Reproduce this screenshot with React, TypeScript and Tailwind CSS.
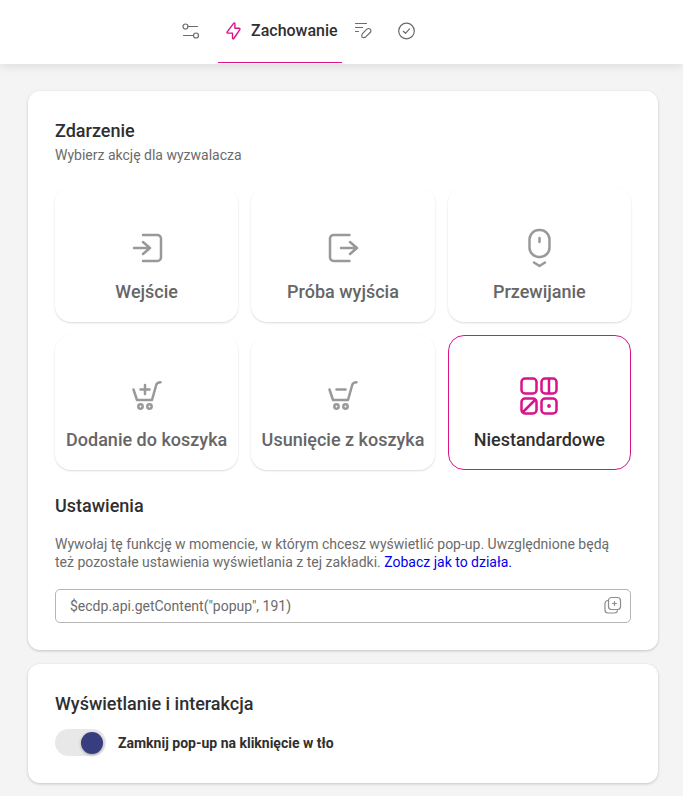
import { useState, type ReactNode } from "react";

const heading = "text-lg leading-6 font-medium text-[#2f2f2f]";

const EnterIcon = () => (
  <svg width="40" height="40" viewBox="0 0 40 40" fill="none" stroke="currentColor" strokeWidth="2.5" strokeLinecap="round" strokeLinejoin="round">
    <path d="M16 7h14.500a3.500 3.500 0 0 1 3.500 3.500v19a3.500 3.500 0 0 1-3.500 3.500H16M7 20h16M16 14l7 6-7 6" />
  </svg>
);

const LeaveIcon = () => (
  <svg width="40" height="40" viewBox="0 0 40 40" fill="none" stroke="currentColor" strokeWidth="2.5" strokeLinecap="round" strokeLinejoin="round">
    <path d="M26.500 7H10.500a3.500 3.500 0 0 0-3.500 3.500v19a3.500 3.500 0 0 0 3.500 3.500h16M18 20h16M27 14l7 6-7 6" />
  </svg>
);

const ScrollIcon = () => (
  <svg width="40" height="40" viewBox="0 0 40 40" fill="none" stroke="currentColor" strokeWidth="2.5" strokeLinecap="round" strokeLinejoin="round">
    <rect x="10.500" y="2" width="20" height="27" rx="9.500" />
    <path d="M20.500 10v4M15 34.500l5.500 3.500 5.500-3.500" />
  </svg>
);

const CartIcon = ({ plus }: { plus?: boolean }) => (
  <svg width="40" height="40" viewBox="0 0 40 40" fill="none" stroke="currentColor" strokeWidth="2.5" strokeLinecap="round" strokeLinejoin="round">
    <path d="M6.500 13.500l3.500 10.500h15l4.200-15q.8-2.700 4.300-2.700" />
    <path d="M13.500 13.500h9" />
    {plus && <path d="M18 9v9" />}
    <circle cx="13.500" cy="30.500" r="2.200" />
    <circle cx="22.500" cy="30.500" r="2.200" />
  </svg>
);

const CustomIcon = () => (
  <svg width="40" height="40" viewBox="0 0 40 40" fill="none" stroke="currentColor" strokeWidth="2.5" strokeLinecap="round">
    <rect x="2.500" y="2.500" width="15" height="15" rx="3.500" />
    <rect x="22.500" y="2.500" width="15" height="15" rx="3.500" />
    <rect x="2.500" y="22.500" width="15" height="15" rx="3.500" />
    <rect x="22.500" y="22.500" width="15" height="15" rx="3.500" />
    <path d="M30 3v14M4 36l12-12" />
    <circle cx="30" cy="30" r="1.900" fill="currentColor" stroke="none" />
  </svg>
);

const events: { id: string; label: string; icon: ReactNode }[] = [
  { id: "enter", label: "Wejście", icon: <EnterIcon /> },
  { id: "leave", label: "Próba wyjścia", icon: <LeaveIcon /> },
  { id: "scroll", label: "Przewijanie", icon: <ScrollIcon /> },
  { id: "add", label: "Dodanie do koszyka", icon: <CartIcon plus /> },
  { id: "remove", label: "Usunięcie z koszyka", icon: <CartIcon /> },
  { id: "custom", label: "Niestandardowe", icon: <CustomIcon /> },
];

const tabIcon = {
  width: 18,
  height: 18,
  viewBox: "0 0 18 18",
  fill: "none",
  stroke: "currentColor",
  strokeWidth: 1.2,
  strokeLinecap: "round",
  strokeLinejoin: "round",
} as const;

function TopBar() {
  return (
    <header className="bg-white shadow-[0_2px_10px_rgba(0,0,0,0.1)]">
      <nav className="flex h-16 justify-center pr-[85px] pb-px text-[#6b6b6b]">
        <button type="button" aria-label="Ustawienia ogólne" className="flex h-[61px] items-center">
          <svg {...tabIcon}>
            <circle cx="3.500" cy="4.500" r="2.500" />
            <path d="M6 4.500h9.500M1.500 13.500h10" />
            <circle cx="14" cy="13.500" r="2.500" />
          </svg>
        </button>
        <button type="button" aria-current="page" className="ml-[18px] flex h-[63px] w-[124px] items-center gap-2 border-b border-[#d9138a] pl-[7px]">
          <svg {...tabIcon} strokeWidth={1.4} className="text-[#d9138a]">
            <path d="M8.600 1.300c.5-.7 1.300-.4 1.300.4v4.600h4.200c.8 0 1.100.7.7 1.300l-6 8.900c-.5.700-1.300.4-1.300-.4v-5H2.800c-.8 0-1-.7-.6-1.300z" />
          </svg>
          <span className="text-base font-medium text-[#2f2f2f]">Zachowanie</span>
        </button>
        <button type="button" aria-label="Treść" className="ml-3 flex h-[60px] items-center">
          <svg {...tabIcon}>
            <path d="M1.500 2.500h11M1.500 6.500h7M1.500 10.500h3" />
            <path d="M8 16.300c-.6-1.500-.3-2.900.7-3.900l4.200-4.200a2.300 2.300 0 0 1 3.300 3.300l-4.200 4.200c-1.100 1-2.500 1.200-4 .6z" />
          </svg>
        </button>
        <button type="button" aria-label="Podsumowanie" className="ml-[26px] flex h-[61px] items-center">
          <svg {...tabIcon}>
            <circle cx="8.500" cy="9" r="7.800" />
            <path d="M5.300 9.300l2.200 2 4-4.500" />
          </svg>
        </button>
      </nav>
    </header>
  );
}

const card = "rounded-xl bg-white px-[27px] shadow-[0_1px_3px_rgba(0,0,0,0.2)]";

export default function App() {
  const [selected, setSelected] = useState("custom");
  const [closeOnBackdrop, setCloseOnBackdrop] = useState(true);

  return (
    <div className="min-h-screen bg-[#f4f4f4] font-[Roboto,sans-serif]">
      <TopBar />
      <main className="flex flex-col gap-3.5 pt-[27px] pr-[25px] pb-3 pl-7">
        <section className={`${card} pt-7 pb-[27px]`}>
          <h2 className={heading}>Zdarzenie</h2>
          <p className="text-sm leading-6 text-[#6b6b6b]">Wybierz akcję dla wyzwalacza</p>

          <div role="radiogroup" aria-label="Zdarzenie" className="mt-5 grid grid-cols-3 gap-[13px]">
            {events.map(({ id, label, icon }) => (
              <label
                key={id}
                className={`flex h-[135px] cursor-pointer flex-col items-center gap-3 rounded-2xl border pt-10 ${
                  selected === id
                    ? "border-[#d9138a] text-[#d9138a]"
                    : "border-transparent text-[#999999] shadow-[0_1px_2px_rgba(0,0,0,0.15)]"
                }`}
              >
                <input type="radio" name="event" value={id} checked={selected === id} onChange={() => setSelected(id)} className="sr-only" />
                {icon}
                <span className={`text-lg leading-6 font-medium whitespace-nowrap ${selected === id ? "text-[#2f2f2f]" : "text-[#666666]"}`}>{label}</span>
              </label>
            ))}
          </div>

          <h2 className={`${heading} mt-6`}>Ustawienia</h2>
          <p className="mt-[17px] text-sm leading-[18px] text-[#6b6b6b]">
            Wywołaj tę funkcję w momencie, w którym chcesz wyświetlić pop-up. Uwzględnione będą też pozostałe ustawienia wyświetlania z tej zakładki.{" "}
            <a href="#" className="text-[#0000ee]">Zobacz jak to działa.</a>
          </p>
          <div className="mt-[18px] flex h-[34px] items-center rounded-[5px] border border-[#b5b5b5] pr-2 pl-3.5">
            <input aria-label="Kod wywołania" readOnly value={'$ecdp.api.getContent("popup", 191)'} className="min-w-0 flex-1 text-sm text-[#6b6b6b] outline-none" />
            <button type="button" aria-label="Kopiuj" className="pb-0.5 text-[#8c8c8c]">
              <svg {...tabIcon}>
                <rect x="4.500" y="1.500" width="12" height="12" rx="3" />
                <path d="M4 4.500A3 3 0 0 0 1 7.500v6.500a3 3 0 0 0 3 3h6.500a3 3 0 0 0 3-2.500M10.500 5.500v4M8.500 7.500h4" />
              </svg>
            </button>
          </div>
        </section>

        <section className={`${card} pt-7 pb-[27px]`}>
          <h2 className={heading}>Wyświetlanie i interakcja</h2>
          <label className="mt-[13px] flex cursor-pointer items-center gap-3">
            <input
              type="checkbox"
              role="switch"
              checked={closeOnBackdrop}
              onChange={(e) => setCloseOnBackdrop(e.target.checked)}
              className="flex h-[27px] w-[51px] appearance-none items-center rounded-full bg-[#e8e8e8] px-[3px] before:size-[22px] before:rounded-full before:bg-[#373d7e] before:shadow-[0_1px_3px_rgba(0,0,0,0.3)] checked:justify-end"
            />
            <span className="text-sm font-bold text-[#2f2f2f]">Zamknij pop-up na kliknięcie w tło</span>
          </label>
        </section>
      </main>
    </div>
  );
}
